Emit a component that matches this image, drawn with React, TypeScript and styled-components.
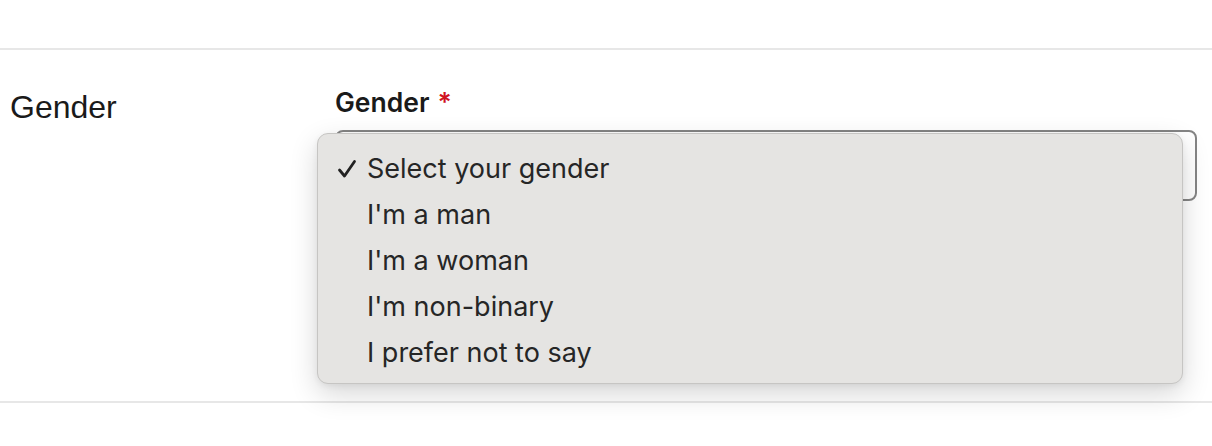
import React from "react";
import styled, { createGlobalStyle } from "styled-components";

const Global = createGlobalStyle`
  html, body { margin: 0; padding: 0; background: #ffffff; }
  body { font-family: "Liberation Sans", Arial, sans-serif; color: #1a1a1a; }
`;

const Page = styled.div`
  width: 1212px;
  height: 446px;
  overflow: hidden;
  background: #fff;
`;

const TopSpace = styled.div`
  height: 48px;
`;

const Divider = styled.div`
  height: 2px;
  background: #e7e7e7;
`;

const FieldRow = styled.div`
  display: grid;
  grid-template-columns: 335px 862px;
  min-height: 351px;
`;

const RowTitle = styled.div`
  padding: 39px 0 0 10px;
  font-size: 32px;
  line-height: 36px;
  color: #1a1a1a;
`;

const FieldCol = styled.div`
  padding-top: 36px;
  display: flex;
  flex-direction: column;
  gap: 12px;
`;

const Label = styled.label`
  font-family: Inter, "Liberation Sans", sans-serif;
  font-size: 26.5px;
  line-height: 32px;
  font-weight: 600;
  color: #1a1a1a;
`;

const Required = styled.span`
  color: #d0121f;
  margin-left: 8px;
`;

const SelectWrap = styled.div`
  position: relative;
  width: 862px;
  height: 71px;
`;

const SelectBox = styled.div`
  box-sizing: border-box;
  width: 100%;
  height: 100%;
  border: 2px solid #858585;
  border-radius: 8px;
  background: #fff;
`;

const Menu = styled.div`
  position: absolute;
  left: -18px;
  top: 3px;
  box-sizing: border-box;
  width: 866px;
  height: 251px;
  padding: 12px 0 0 0;
  background: #e5e4e2;
  border: 1px solid #c6c5c3;
  border-radius: 11px;
  box-shadow: 0 10px 28px rgba(0, 0, 0, 0.16), 0 2px 6px rgba(0, 0, 0, 0.06);
  display: flex;
  flex-direction: column;
`;

const Option = styled.div`
  display: flex;
  align-items: center;
  height: 46px;
  font-family: Inter, "Liberation Sans", sans-serif;
  font-size: 27px;
  line-height: 46px;
  color: #262626;
`;

const CheckSlot = styled.span`
  width: 49px;
  flex: none;
  display: flex;
  align-items: center;
  padding-left: 19px;
  box-sizing: border-box;
`;

const Check = () => (
  <svg width="20" height="20" viewBox="0 0 20 20" fill="none">
    <path
      d="M2.5 11 L7.5 17 L17.5 2.5"
      stroke="#222"
      strokeWidth="2.8"
      strokeLinecap="round"
      strokeLinejoin="round"
    />
  </svg>
);

const options = [
  "Select your gender",
  "I'm a man",
  "I'm a woman",
  "I'm non-binary",
  "I prefer not to say",
];

export default function App() {
  return (
    <Page>
      <Global />
      <TopSpace />
      <Divider />
      <FieldRow>
        <RowTitle>Gender</RowTitle>
        <FieldCol>
          <Label>
            Gender<Required>*</Required>
          </Label>
          <SelectWrap>
            <SelectBox />
            <Menu>
              {options.map((o, i) => (
                <Option key={o}>
                  <CheckSlot>{i === 0 ? <Check /> : null}</CheckSlot>
                  {o}
                </Option>
              ))}
            </Menu>
          </SelectWrap>
        </FieldCol>
      </FieldRow>
      <Divider />
    </Page>
  );
}
